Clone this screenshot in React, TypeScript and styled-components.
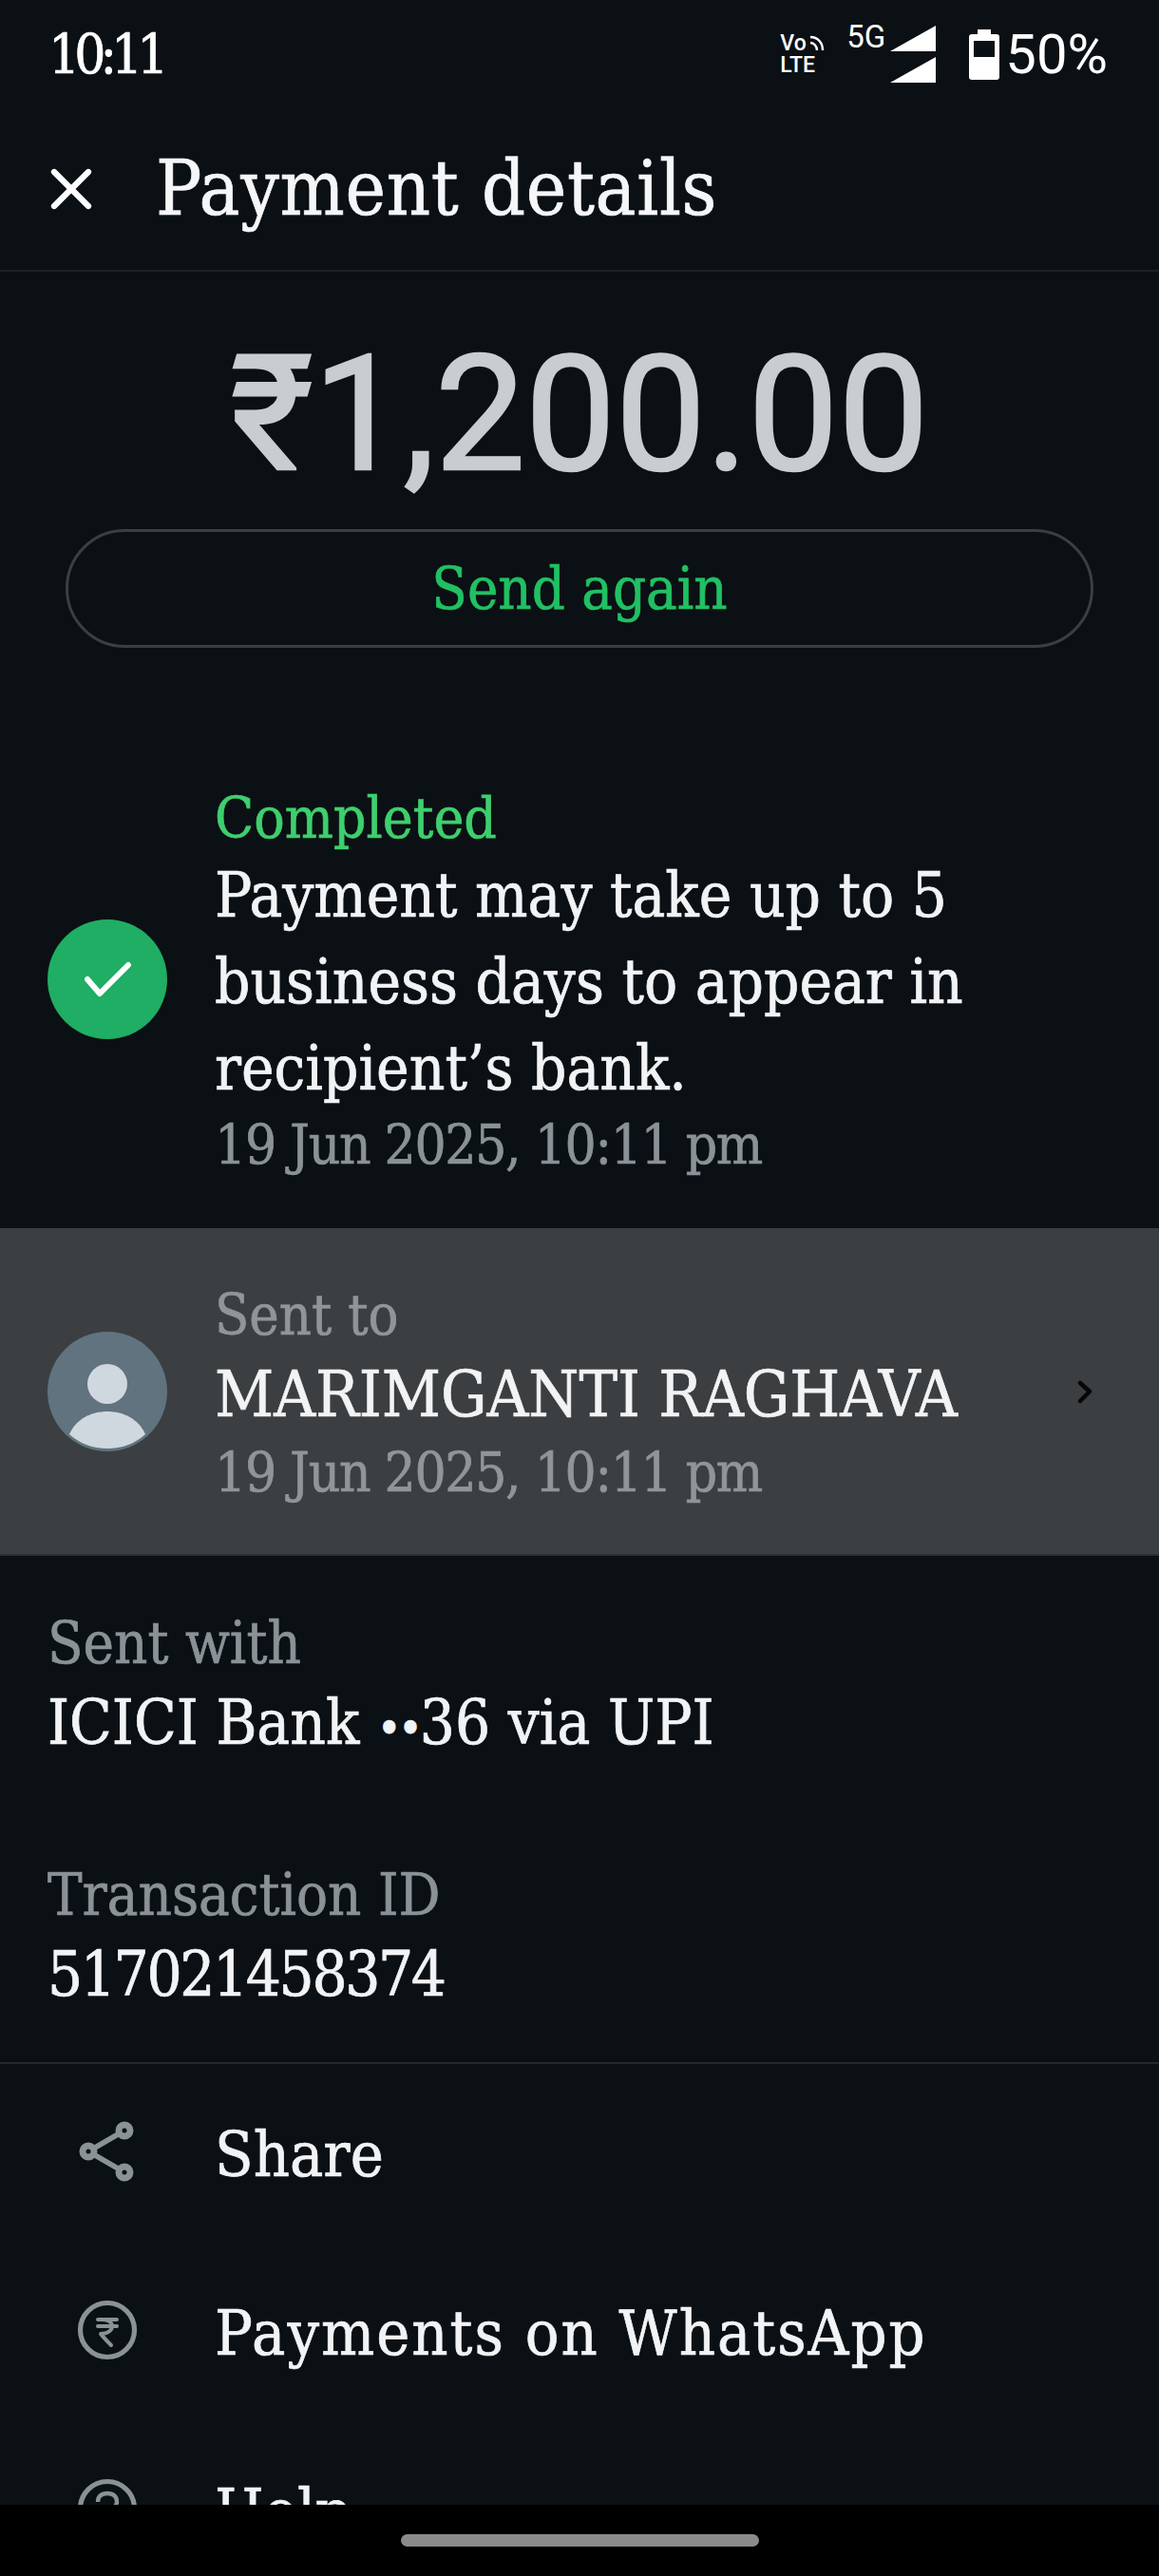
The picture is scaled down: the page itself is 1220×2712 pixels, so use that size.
import styled, { createGlobalStyle } from "styled-components";
import { X } from "lucide-react";

const GlobalStyle = createGlobalStyle`
    html, body {
        margin: 0;
        padding: 0;
        background: #0b1014;
    }
    * {
        box-sizing: border-box;
    }
`;

export default function App() {
    return (
        <Screen>
            <GlobalStyle />
            <StatusBar>
                <Clock>10:11</Clock>
                <StatusIcons>
                    <VoLte>
                        <VoLine>
                            Vo
                            <svg width="16" height="17" viewBox="0 0 16 17" fill="none" stroke="#fff" strokeWidth="2.4">
                                <path d="M1 2c8 0 13 6 13 14" />
                                <path d="M1 8c4 0 7 4 7 8" />
                            </svg>
                        </VoLine>
                        <span>LTE</span>
                    </VoLte>
                    <FiveG>5G</FiveG>
                    <svg width="48" height="60" viewBox="0 0 48 60" fill="#fff">
                        <polygon points="48,0 48,27 0,27" />
                        <polygon points="48,33 48,60 0,60" />
                    </svg>
                    <BatteryIcon width="32" height="53" viewBox="0 0 32 53">
                        <path
                            fillRule="evenodd"
                            fill="#fff"
                            d="M9 0h14v5h6a3 3 0 0 1 3 3v42a3 3 0 0 1-3 3H3a3 3 0 0 1-3-3V8a3 3 0 0 1 3-3h6z M5 12v17h22V12z"
                        />
                    </BatteryIcon>
                    <BatteryText>50%</BatteryText>
                </StatusIcons>
            </StatusBar>

            <Header>
                <CloseIcon><X size={72} strokeWidth={2.1} /></CloseIcon>
                <Title>Payment details</Title>
            </Header>

            <Content>
                <Amount>₹1,200.00</Amount>
                <SendAgain>Send again</SendAgain>

                <StatusRow>
                    <CheckCircle viewBox="0 0 126 126">
                        <circle cx="63" cy="63" r="63" fill="#1fae63" />
                        <polyline points="42,63 55,78 85,48" fill="none" stroke="#fff" strokeWidth="6" strokeLinecap="round" strokeLinejoin="round" />
                    </CheckCircle>
                    <Column>
                        <Completed>Completed</Completed>
                        <Body>Payment may take up to 5<br />business days to appear in<br />recipient’s bank.</Body>
                        <DateLine>19 Jun 2025, 10:11 pm</DateLine>
                    </Column>
                </StatusRow>

                <SentRow>
                    <Avatar viewBox="0 0 126 126">
                        <circle cx="63" cy="63" r="63" fill="#60737f" />
                        <ellipse cx="63" cy="55" rx="21" ry="21" fill="#d0d8df" />
                        <path d="M23 108c7-16 23-24 40-24s33 8 40 24c-11 10-25 15-40 15s-29-5-40-15z" fill="#d0d8df" />
                    </Avatar>
                    <SentColumn>
                        <SentLabel>Sent to</SentLabel>
                        <SentName>MARIMGANTI RAGHAVA</SentName>
                        <SentDate>19 Jun 2025, 10:11 pm</SentDate>
                    </SentColumn>
                    <svg width="20" height="28" viewBox="0 0 20 28" fill="none" stroke="#050708" strokeWidth="4.5" strokeLinecap="round" strokeLinejoin="round">
                        <polyline points="5,5 15,14 5,24" />
                    </svg>
                </SentRow>

                <InfoBlock>
                    <InfoGroup>
                        <InfoLabel>Sent with</InfoLabel>
                        <InfoValue>ICICI Bank <Dots>••</Dots>36 via UPI</InfoValue>
                    </InfoGroup>
                    <InfoGroup>
                        <InfoLabel>Transaction ID</InfoLabel>
                        <InfoValue $tight>517021458374</InfoValue>
                    </InfoGroup>
                </InfoBlock>

                <Menu>
                    <MenuRow>
                        <MenuIcon>
                            <svg width="60" height="64" viewBox="0 0 60 64" fill="none" stroke="currentColor" strokeWidth="5.5">
                                <path d="M48 10 10 32l38 22" />
                                <circle cx="48" cy="10" r="6" fill="#0b1014" strokeWidth="7" />
                                <circle cx="10" cy="32" r="6" fill="#0b1014" strokeWidth="7" />
                                <circle cx="48" cy="54" r="6" fill="#0b1014" strokeWidth="7" />
                            </svg>
                        </MenuIcon>
                        <MenuText>Share</MenuText>
                    </MenuRow>
                    <MenuRow>
                        <MenuIcon>
                            <svg width="64" height="64" viewBox="0 0 64 64" fill="none" stroke="currentColor" strokeWidth="5.2">
                                <circle cx="32" cy="32" r="28.5" />
                                <path strokeWidth="4" d="M22 21h20M22 28h20M25 21c8 0 12 3 12 7s-4 8-12 8c3 4 7 8 11 12" strokeLinecap="round" strokeLinejoin="round" />
                            </svg>
                        </MenuIcon>
                        <MenuText $spread>Payments on WhatsApp</MenuText>
                    </MenuRow>
                    <MenuRow>
                        <MenuIcon>
                            <svg width="64" height="64" viewBox="0 0 64 64" fill="none" stroke="currentColor" strokeWidth="5.2">
                                <circle cx="32" cy="32" r="28.5" />
                                <path strokeWidth="4.4" d="M22 25c0-6 4-9 10-9s10 3 10 9c0 7-10 8-10 15" />
                            </svg>
                        </MenuIcon>
                        <MenuText>Help</MenuText>
                    </MenuRow>
                </Menu>
            </Content>

            <NavBar>
                <NavPill />
            </NavBar>
        </Screen>
    );
}

const serif = `"DejaVu Serif Condensed", "DejaVu Serif", serif`;

const Screen = styled.div`
    width: 1220px;
    height: 2712px;
    display: flex;
    flex-direction: column;
    overflow: hidden;
    background: #0b1014;
    color: #f1f3f4;
    font-family: ${serif};
    -webkit-text-stroke: 0.7px;
`;

const StatusBar = styled.div`
    height: 100px;
    flex: none;
    display: flex;
    align-items: center;
    justify-content: space-between;
    padding: 14px 54px 0 51px;
`;

const Clock = styled.div`
    font-size: 58px;
    line-height: 60px;
    color: #fff;
    letter-spacing: -6px;
`;

const StatusIcons = styled.div`
    display: flex;
    align-items: center;
    color: #fff;
    font-family: Roboto, sans-serif;
    -webkit-text-stroke: 0;
`;

const VoLte = styled.div`
    display: flex;
    flex-direction: column;
    width: 70px;
    font-size: 23px;
    font-weight: 500;
    line-height: 23px;
`;

const VoLine = styled.div`
    display: flex;
    align-items: center;
    gap: 3px;
`;

const FiveG = styled.div`
    width: 46px;
    font-size: 33px;
    font-weight: 400;
    line-height: 32px;
    align-self: flex-start;
    margin-top: -4px;
`;

const BatteryIcon = styled.svg`
    margin-left: 35px;
`;

const BatteryText = styled.div`
    margin-left: 6px;
    font-size: 58px;
    line-height: 60px;
`;

const Header = styled.div`
    height: 186px;
    flex: none;
    display: flex;
    align-items: center;
    border-bottom: 2px solid #1c2125;
    padding-top: 14px;
`;

const CloseIcon = styled.div`
    width: 164px;
    padding-left: 39px;
    display: flex;
    color: #fff;
`;

const Title = styled.h1`
    margin: 0;
    font-size: 80px;
    font-weight: 400;
    letter-spacing: 0.7px;
    line-height: 90px;
    color: #f4f6f8;
`;

const Content = styled.div`
    flex: 1;
    min-height: 0;
    overflow: hidden;
`;

const Amount = styled.div`
    margin-top: 65px;
    height: 206px;
    font-family: Roboto, sans-serif;
    font-size: 169px;
    line-height: 170px;
    color: #c9ccd0;
    text-align: center;
    -webkit-text-stroke: 2.5px;
`;

const SendAgain = styled.div`
    margin: 0 69px;
    height: 125px;
    display: flex;
    align-items: center;
    justify-content: center;
    border: 3px solid #3a3f42;
    border-radius: 63px;
    font-size: 61px;
    color: #21c063;
`;

const StatusRow = styled.div`
    display: flex;
    align-items: center;
    margin-top: 144px;
    padding: 0 50px 52px;
`;

const CheckCircle = styled.svg`
    width: 126px;
    height: 126px;
    flex: none;
    margin-top: -6px;
`;

const Column = styled.div`
    margin-left: 50px;
`;

const Completed = styled.div`
    font-size: 60px;
    line-height: 71px;
    color: #3ecf6e;
`;

const Body = styled.div`
    font-size: 65px;
    line-height: 91px;
    color: #f1f3f4;
`;

const DateLine = styled.div`
    font-size: 58px;
    letter-spacing: -1.3px;
    line-height: 71px;
    color: #8b9296;
`;

const SentRow = styled.div`
    height: 345px;
    display: flex;
    align-items: center;
    padding: 0 68px 0 50px;
    background: #3b3f42;
    border-bottom: 2px solid #2c3034;
`;

const Avatar = styled.svg`
    width: 126px;
    height: 126px;
    flex: none;
`;

const SentColumn = styled.div`
    flex: 1;
    margin-left: 50px;
    padding-top: 6px;
`;

const SentLabel = styled.div`
    font-size: 59px;
    line-height: 83px;
    color: #8f9598;
`;

const SentName = styled.div`
    font-size: 67.5px;
    line-height: 83px;
    color: #f1f3f4;
`;

const SentDate = styled(SentLabel)`
    font-size: 58px;
    letter-spacing: -1.3px;
`;

const InfoBlock = styled.div`
    display: flex;
    flex-direction: column;
    gap: 97px;
    padding: 50px 50px 50px;
    border-bottom: 2px solid #23282c;
`;

const InfoGroup = styled.div`
    display: flex;
    flex-direction: column;
`;

const InfoLabel = styled.div`
    font-size: 61px;
    line-height: 84px;
    color: #8b9296;
`;

const InfoValue = styled.div<{ $tight?: boolean }>`
    font-size: 65px;
    letter-spacing: ${(p) => (p.$tight ? "-2.4px" : "0")};
    line-height: 84px;
    color: #f1f3f4;
`;

const Dots = styled.span`
    font-size: 48px;
    line-height: 0;
    letter-spacing: -3px;
`;

const Menu = styled.div`
    display: flex;
    flex-direction: column;
    padding-top: 2px;
`;

const MenuRow = styled.div`
    height: 188px;
    flex: none;
    display: flex;
    align-items: center;
`;

const MenuIcon = styled.div`
    width: 226px;
    display: flex;
    justify-content: center;
    padding-bottom: 9px;
    color: #8b9296;
`;

const MenuText = styled.div<{ $spread?: boolean }>`
    font-size: 66px;
    letter-spacing: ${(p) => (p.$spread ? "2px" : "0")};
    line-height: 84px;
    color: #f1f3f4;
`;

const NavBar = styled.div`
    height: 75px;
    flex: none;
    display: flex;
    align-items: center;
    justify-content: center;
    background: #000;
`;

const NavPill = styled.div`
    width: 377px;
    height: 13px;
    border-radius: 7px;
    background: #8a8a8a;
`;
